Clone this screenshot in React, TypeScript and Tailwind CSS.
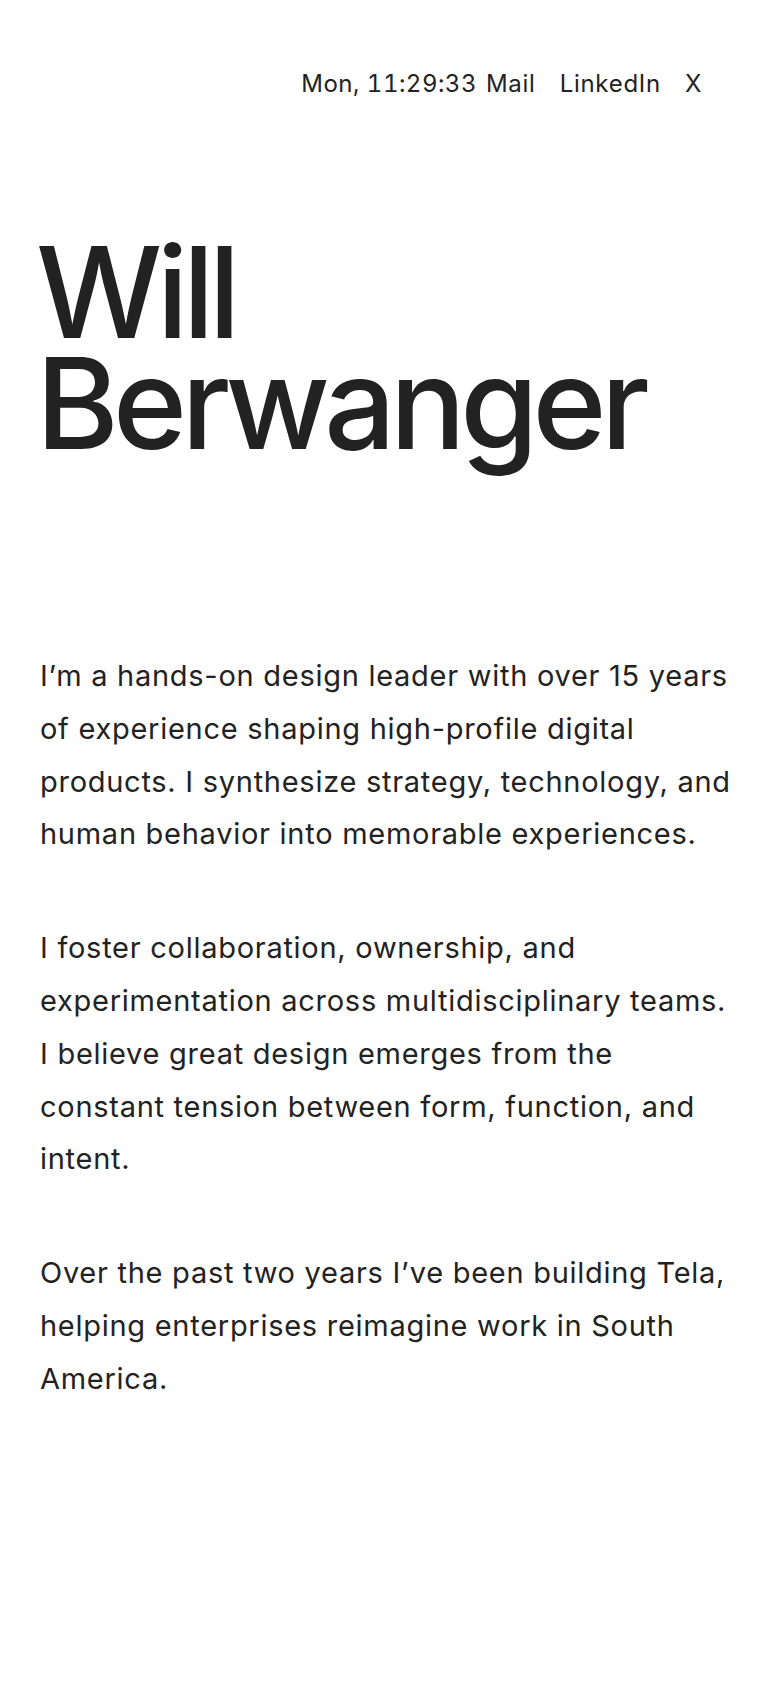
import React from 'react';

const paragraphs = [
  'I’m a hands-on design leader with over 15 years of experience shaping high-profile digital products. I synthesize strategy, technology, and human behavior into memorable experiences.',
  'I foster collaboration, ownership, and experimentation across multidisciplinary teams. I believe great design emerges from the constant tension between form, function, and intent.',
  'Over the past two years I’ve been building Tela, helping enterprises reimagine work in South America.',
];

export default function App() {
  return (
    <div className="min-h-[1688px] w-full bg-white text-[#222222] font-['Inter','Liberation_Sans',Arial,sans-serif]">
      {/* Header */}
      <header className="flex items-center justify-end pt-[68px] pr-[78px] text-[24px] leading-[32px] tracking-[0.03em]">
        <span className="mr-[9px] tabular-nums tracking-[0.02em]">Mon, 11:29:33</span>
        <nav className="flex items-center gap-[24px]">
          <a href="#">Mail</a>
          <a href="#">LinkedIn</a>
          <a href="#">X</a>
        </nav>
      </header>

      {/* Name */}
      <h1 className="mt-[137px] px-[36px] text-[126px] leading-[111px] font-medium tracking-[-0.045em]">
        Will
        <br />
        Berwanger
      </h1>

      {/* Bio */}
      <main className="mt-[191px] pl-[40px] pr-[45px] max-w-[780px]">
        {paragraphs.map((p, i) => (
          <p key={i} className="text-[29px] leading-[52.8px] tracking-[0.025em] mb-[61px]">
            {p}
          </p>
        ))}
      </main>
    </div>
  );
}
